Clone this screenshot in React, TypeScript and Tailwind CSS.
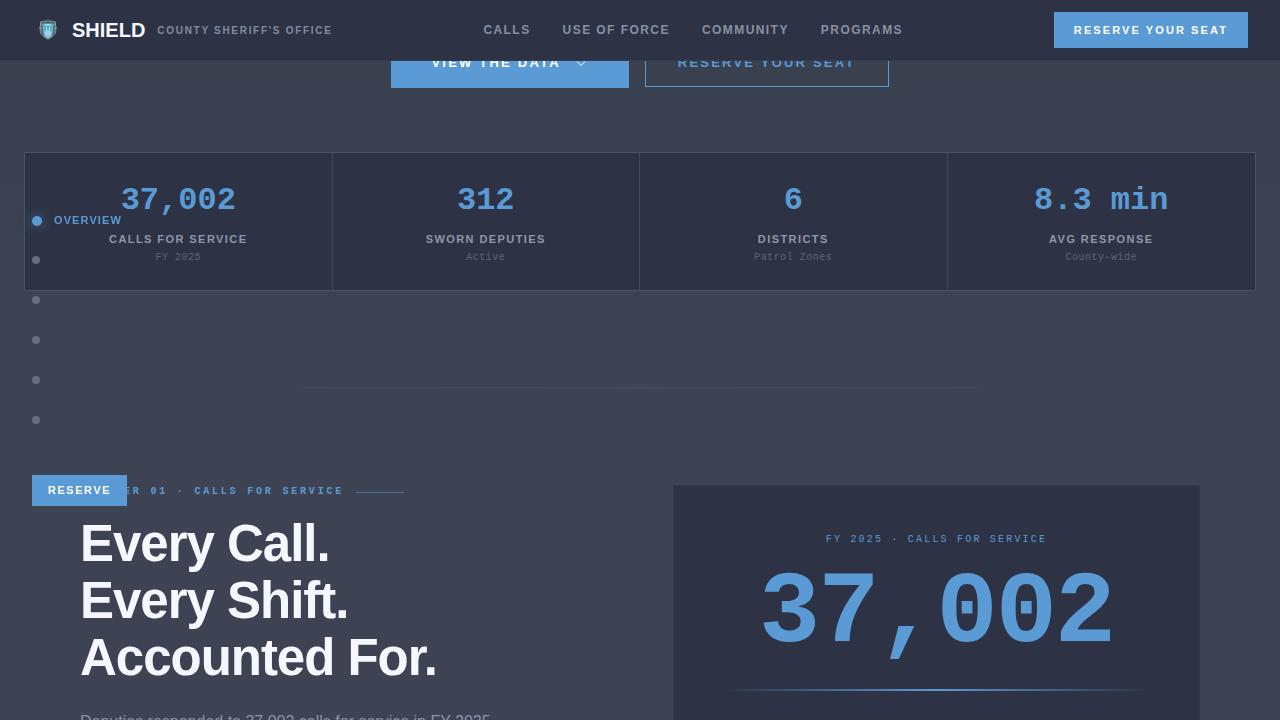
import { useState } from 'react';

const navLinks = [
  { label: 'Calls',        href: '#calls'     },
  { label: 'Use of Force', href: '#force'     },
  { label: 'Community',    href: '#community' },
  { label: 'Programs',     href: '#programs'  },
];

const stats = [
  { value: '37,002',  label: 'Calls for Service', note: 'FY 2025'      },
  { value: '312',     label: 'Sworn Deputies',    note: 'Active'       },
  { value: '6',       label: 'Districts',         note: 'Patrol Zones' },
  { value: '8.3 min', label: 'Avg Response',      note: 'County-wide'  },
];

const chapters = ['Overview', 'Calls', 'Use of Force', 'Community', 'Programs', 'Reserve'];

function Crest() {
  return (
    <svg viewBox="0 0 32 32" className="w-8 h-8" aria-hidden="true">
      <path d="M8.500 8 12 7.200 16 6.800l4 .4 3.500.8.300 9c-.3 3.400-3.300 6-7.800 8-4.500-2-7.500-4.600-7.800-8z" fill="#4c6475" stroke="#a3a5a5" strokeWidth="0.800" />
      <path d="M10.500 9.500h11l-.3 8c-.3 2.800-2.200 4.800-5.200 6.300-3-1.500-4.900-3.500-5.200-6.300z" fill="#5fafcb" />
      <path d="M12.500 10h7l-1.500 2.500v4l2 3-4 3.500-4-3.500 2-3v-4z" fill="#93d6e8" />
      <path d="M14.500 12.500h3M16 12.500v4" stroke="#3f7f9b" strokeWidth="0.900" fill="none" />
      <path d="M12.500 21.500 16 24.500l3.500-3" stroke="#c4e3ea" strokeWidth="0.900" fill="none" />
      <path d="M7 13.500l2.500 1M25 13.500l-2.500 1M9 9.500l1.500 2M23 9.500l-1.500 2" stroke="#b8a58c" strokeWidth="1" />
    </svg>
  );
}

function Navbar() {
  return (
    <header className="fixed top-0 left-0 right-0 z-50 h-[61px] px-8 flex items-center justify-between bg-[#2d3345] border-b border-[#353c4d]">
      <a href="#top" className="flex items-center gap-3">
        <span className="flex items-center gap-2">
          <Crest />
          <span className="text-xl font-bold text-[#f4f7fd]">SHIELD</span>
        </span>
        <span className="text-[10px] font-bold uppercase tracking-[0.17em] text-[#838c9f]">
          County Sheriff's Office
        </span>
      </a>

      <nav className="flex items-center gap-8">
        {navLinks.map((link) => (
          <a
            key={link.href}
            href={link.href}
            className="text-xs font-bold uppercase tracking-[0.12em] text-[#8791a3] hover:text-white"
          >
            {link.label}
          </a>
        ))}
      </nav>

      <button className="h-9 px-5 bg-[#5b9bd5] text-[11px] font-bold uppercase tracking-[0.19em] text-white">
        Reserve Your Seat
      </button>
    </header>
  );
}

function ChapterNav() {
  const [active, setActive] = useState(0);

  return (
    <aside className="fixed left-8 top-[214px] z-40 flex flex-col items-start">
      {chapters.map((chapter, i) => (
        <button
          key={chapter}
          aria-label={chapter}
          onClick={() => setActive(i)}
          className="h-10 flex items-start gap-3"
        >
          {i === active ? (
            <>
              <span className="mt-[2px] w-[10px] h-[10px] rounded-full bg-[#5b9bd5] shadow-[0_0_12px_rgba(91,155,213,0.5)]" />
              <span className="text-[11px] leading-[13px] font-bold uppercase tracking-widest text-[#5b9bd5]">
                {chapter}
              </span>
            </>
          ) : (
            <span className="mt-[2px] w-2 h-2 rounded-full bg-[#666d7d]" />
          )}
        </button>
      ))}
      <button className="mt-[21px] h-[31px] px-4 bg-[#5b9bd5] text-[11px] font-bold uppercase tracking-[0.14em] text-white">
        Reserve
      </button>
    </aside>
  );
}

function Stats() {
  return (
    <div className="mx-6 mt-16 grid grid-cols-4 border border-[#4a5365] divide-x divide-[#414a5b] bg-[#2d3345]">
      {stats.map((stat) => (
        <div key={stat.label} className="px-6 pt-[30px] pb-[23px] flex flex-col items-center">
          <p className="font-['Liberation_Mono',monospace] text-[32px] leading-9 font-bold text-[#5b9bd5]">{stat.value}</p>
          <p className="mt-[10px] text-[11px] leading-5 font-bold uppercase tracking-[0.13em] text-[#8f97a9]">{stat.label}</p>
          <p className="font-['Liberation_Mono',monospace] text-[10px] leading-[18px] tracking-[0.05em] text-[#5d6577]">{stat.note}</p>
        </div>
      ))}
    </div>
  );
}

export default function App() {
  return (
    <div id="top" className="h-screen overflow-hidden bg-linear-to-b from-[#38404e] to-[#3d4353] to-50% font-['Liberation_Sans',Arial,sans-serif]">
      <Navbar />
      <ChapterNav />

      {/* Hero actions, partly under the header */}
      <div className="pt-[38px] flex items-start justify-center gap-4">
        <button className="h-[50px] px-10 flex items-center gap-3 bg-[#5b9bd5] text-[13px] font-bold uppercase tracking-[0.17em] text-white">
          View the Data
          <svg viewBox="0 0 16 16" className="w-4 h-4" fill="none" stroke="currentColor" strokeWidth="1" aria-hidden="true">
            <path d="M4 6.500l4 4 4-4" />
          </svg>
        </button>
        <button className="h-[49px] px-8 border border-[#5b9bd5] text-[13px] font-bold uppercase tracking-[0.17em] text-[#5b9bd5]">
          Reserve Your Seat
        </button>
      </div>

      <Stats />

      <div className="mt-24 mx-auto w-[1024px] max-w-full h-px bg-linear-to-r from-transparent via-[#425365] to-transparent" />

      {/* Chapter 01 */}
      <section id="calls" className="mt-[97px] px-20 grid grid-cols-2 gap-[66px]">
        <div>
          <div className="flex items-center gap-3">
            <p className="font-['Liberation_Mono',monospace] text-[10px] leading-[14px] font-bold uppercase tracking-[0.28em] text-[#5b9bd5]">
              Chapter 01 · Calls for Service
            </p>
            <span className="w-12 h-px bg-[#4c7199]" />
          </div>
          <h2 className="mt-4 text-[51px] leading-[57px] font-bold tracking-[-0.02em] text-[#f4f7fd]">
            Every Call.<br />Every Shift.<br />Accounted For.
          </h2>
          <p className="mt-6 text-base leading-6 text-[#8b93a6]">
            Deputies responded to 37,002 calls for service in FY 2025
          </p>
        </div>

        <div className="p-12 bg-[#2d3345] border border-[#323a4c] flex flex-col items-center">
          <p className="font-['Liberation_Mono',monospace] text-[10px] leading-3 uppercase tracking-[0.22em] text-[#5b9bd5]">
            FY 2025 · Calls for Service
          </p>
          <p className="mt-[17px] font-['Liberation_Mono',monospace] text-[102px] leading-none font-bold tracking-[-0.02em] text-[#5b9bd5]">
            37,002
          </p>
          <div className="mt-6 w-full h-[2px] bg-linear-to-r from-transparent via-[#5b9bd5] to-transparent" />
        </div>
      </section>
    </div>
  );
}
